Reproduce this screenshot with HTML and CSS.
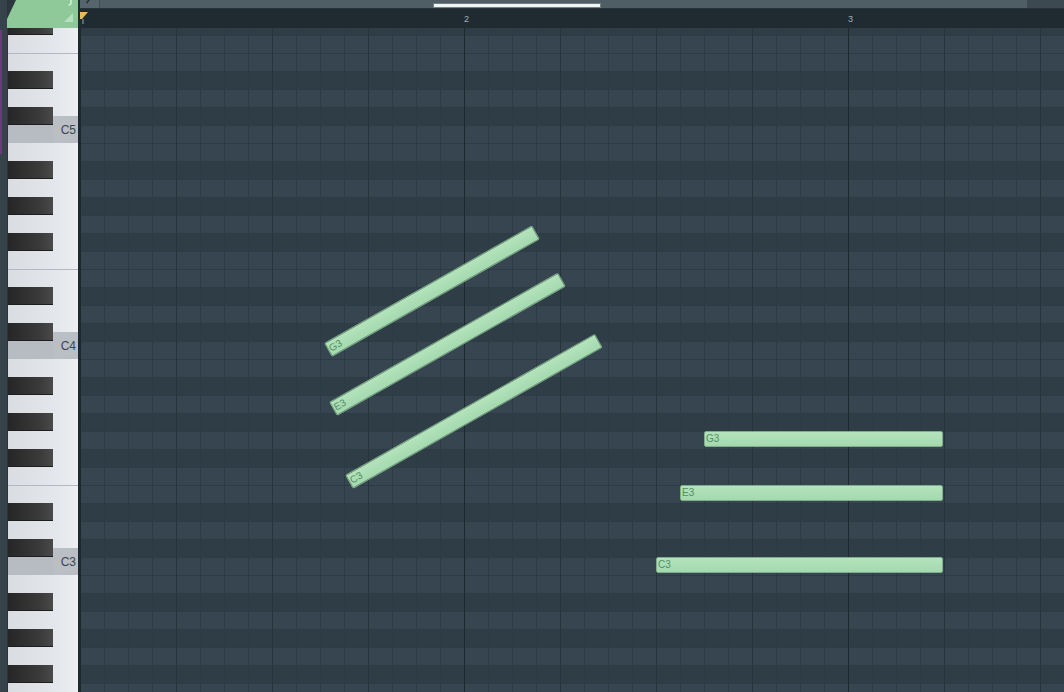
FILE: index.html
```html
<!DOCTYPE html>
<html>
<head>
    <title>Piano Roll</title>
    <link rel="stylesheet" href="styles.css">
</head>
<body>
    <div class="roll">
        <div class="corner">
            <svg width="80" height="28" viewBox="0 0 80 28">
                <rect x="0" y="0" width="7" height="28" fill="#37434b"/>
                <rect x="7" y="0" width="1" height="28" fill="#2a353c"/>
                <polygon points="16,0 78,0 78,28 7,28 7,19" fill="#8fc99a"/>
                <path d="M71 0 V3 Q71 5 68.5 5" stroke="#d6efda" stroke-width="1.5" fill="none"/>
                <polygon points="64,22 73,22 73,13" fill="#b7e1be"/>
                <rect x="78" y="0" width="2" height="28" fill="#1e2a31"/>
            </svg>
        </div>

        <div class="header">
            <div class="scrollbar">
                <div class="sb-btn">
                    <svg width="6" height="6" viewBox="0 0 6 6">
                        <path d="M4 0 L1.5 3" stroke="#1f2a30" stroke-width="1.4" fill="none"/>
                    </svg>
                </div>
                <div class="sb-track"><div class="sb-thumb"></div></div>
                <div class="sb-end"></div>
            </div>
            <div class="ruler">
                <div class="bar">
                    <svg class="marker" width="9" height="12" viewBox="0 0 9 12">
                        <polygon points="0,0 8,0 2,7 0,7" fill="#e6bb59"/>
                        <rect x="2" y="7" width="2" height="5" fill="#55687a"/>
                    </svg>
                </div>
                <div class="bar">2</div>
                <div class="bar">3</div>
            </div>
        </div>

        <div class="side">
            <div class="strip"><div class="strip-mark"></div></div>
            <div class="keys">
                <div class="row blk first"><span class="bk"></span><span class="wk"></span></div>
                <div class="row"></div>
                <div class="row edge"></div>
                <div class="row blk"><span class="bk"></span><span class="wk"></span></div>
                <div class="row"></div>
                <div class="row blk"><span class="bk"></span><span class="wk"></span></div>
                <div class="row c"><span class="c-left"></span><span class="c-label">C5</span></div>
                <div class="row"></div>
                <div class="row blk"><span class="bk"></span><span class="wk"></span></div>
                <div class="row"></div>
                <div class="row blk"><span class="bk"></span><span class="wk"></span></div>
                <div class="row"></div>
                <div class="row blk"><span class="bk"></span><span class="wk"></span></div>
                <div class="row"></div>
                <div class="row edge"></div>
                <div class="row blk"><span class="bk"></span><span class="wk"></span></div>
                <div class="row"></div>
                <div class="row blk"><span class="bk"></span><span class="wk"></span></div>
                <div class="row c"><span class="c-left"></span><span class="c-label">C4</span></div>
                <div class="row"></div>
                <div class="row blk"><span class="bk"></span><span class="wk"></span></div>
                <div class="row"></div>
                <div class="row blk"><span class="bk"></span><span class="wk"></span></div>
                <div class="row"></div>
                <div class="row blk"><span class="bk"></span><span class="wk"></span></div>
                <div class="row"></div>
                <div class="row edge"></div>
                <div class="row blk"><span class="bk"></span><span class="wk"></span></div>
                <div class="row"></div>
                <div class="row blk"><span class="bk"></span><span class="wk"></span></div>
                <div class="row c"><span class="c-left"></span><span class="c-label">C3</span></div>
                <div class="row"></div>
                <div class="row blk"><span class="bk"></span><span class="wk"></span></div>
                <div class="row"></div>
                <div class="row blk"><span class="bk"></span><span class="wk"></span></div>
                <div class="row"></div>
                <div class="row blk"><span class="bk"></span><span class="wk"></span></div>
                <div class="row"></div>
            </div>
        </div>

        <div class="grid">
            <div class="note tilt" style="left: 248px; top: 314px; width: 239px;">G3</div>
            <div class="note tilt" style="left: 253px; top: 373px; width: 263px;">E3</div>
            <div class="note tilt" style="left: 269px; top: 446px; width: 287px;">C3</div>

            <div class="note" style="left: 624px; top: 403px; width: 239px;">G3</div>
            <div class="note" style="left: 600px; top: 457px; width: 263px;">E3</div>
            <div class="note" style="left: 576px; top: 529px; width: 287px;">C3</div>
        </div>
    </div>
</body>
</html>
```

FILE: styles.css
```css
body {
    margin: 0;
    width: 1064px;
    height: 692px;
    overflow: hidden;
    background-color: #2b363d;
    font-family: "Liberation Sans", Arial, sans-serif;
}
.roll {
    display: grid;
    grid-template-columns: 80px 984px;
    grid-template-rows: 28px 664px;
    height: 692px;
    overflow: hidden;
}
.corner svg {
    display: block;
}

/* top: scrollbar + ruler */
.header {
    display: flex;
    flex-direction: column;
    overflow: hidden;
}
.scrollbar {
    display: flex;
    height: 8px;
    border-bottom: 1px solid #27333a;
    background-color: #4f5d65;
}
.sb-btn {
    width: 20px;
    background-color: #56646c;
    padding-left: 5px;
    box-sizing: border-box;
    border-right: 1px solid #3e4b52;
}
.sb-btn svg {
    display: block;
}
.sb-track {
    flex: 1;
}
.sb-thumb {
    margin-left: 334px;
    margin-top: 4px;
    width: 166px;
    height: 3px;
    background-color: #eef5f4;
    box-shadow: 0 0 0 1px #6e7f86;
}
.sb-end {
    width: 37px;
    background-color: #3d4950;
}
.ruler {
    display: flex;
    height: 19px;
    overflow: hidden;
    background-color: #1f2a31;
}
.bar {
    flex: none;
    width: 384px;
    color: #a4afb6;
    font-size: 9px;
    line-height: 11px;
    padding-top: 5px;
    box-sizing: border-box;
}
.marker {
    display: block;
    margin-top: -2px;
}

/* keyboard */
.side {
    display: flex;
    overflow: hidden;
}
.strip {
    width: 7px;
    background-color: #37434b;
    border-right: 1px solid #2a353c;
}
.strip-mark {
    width: 2px;
    height: 124px;
    margin-top: 2px;
    background-color: #6e3a7a;
}
.keys {
    width: 70px;
    border-right: 2px solid #1e2a31;
    background: linear-gradient(to right, #d9dde2, #e4e7eb 70%, #edeff2);
}
.row {
    display: flex;
    height: 18px;
}
.row.first {
    margin-top: -11px;
}
.row.edge {
    box-shadow: inset 0 1px #b4b9bf;
}
.bk {
    width: 45px;
    background: linear-gradient(to right, #262626, #3a3a3a 70%, #4a4a4a);
    box-shadow: inset 0 -1px #1d1d1d;
}
.wk {
    flex: 1;
}
.row.c {
    align-items: flex-end;
}
.c-left {
    width: 45px;
    height: 18px;
    background-color: #b7bbc2;
}
.c-label {
    width: 25px;
    height: 27px;
    margin-top: -9px;
    padding-top: 2px;
    background-color: #babec5;
    color: #3b4751;
    font-size: 12px;
    line-height: 25px;
    text-align: right;
    padding-right: 2px;
    box-sizing: border-box;
}

/* note grid */
.grid {
    position: relative;
    overflow: hidden;
    background-color: #34434d;
    background-image:
        linear-gradient(to right, #1d282f 1px, transparent 1px),
        linear-gradient(to right, #27343c 1px, transparent 1px),
        linear-gradient(to right, #2d3b44 1px, transparent 1px),
        linear-gradient(to bottom, #2d3b44 1px, transparent 1px),
        linear-gradient(to bottom,
            #36454f 0, #36454f 18px,
            #2f3d47 18px, #2f3d47 36px,
            #36454f 36px, #36454f 54px,
            #2f3d47 54px, #2f3d47 72px,
            #36454f 72px, #36454f 90px,
            #2f3d47 90px, #2f3d47 108px,
            #36454f 108px, #36454f 144px,
            #2f3d47 144px, #2f3d47 162px,
            #36454f 162px, #36454f 180px,
            #2f3d47 180px, #2f3d47 198px,
            #36454f 198px, #36454f 216px);
    background-size: 384px 100%, 96px 100%, 24px 100%, 100% 18px, 100% 216px;
    background-position: 0 0, 0 0, 0 0, 0 7px, 0 115px;
}
.note {
    position: absolute;
    height: 16px;
    box-sizing: border-box;
    border: 1px solid #7eae89;
    border-radius: 2px;
    background: linear-gradient(#b4e3bc, #a4d9ae);
    color: #558e62;
    font-size: 10px;
    line-height: 14px;
    padding-left: 1px;
}
.note.tilt {
    transform-origin: 0 50%;
    transform: rotate(-29.5deg);
}
```
